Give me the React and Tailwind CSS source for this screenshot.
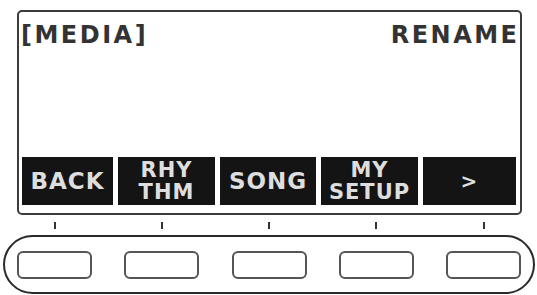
const cells = [
  { lines: ['BACK'], w: 'w-[91px]' },
  { lines: ['RHY', 'THM'], w: 'w-[97px]' },
  { lines: ['SONG'], w: 'w-[96px]' },
  { lines: ['MY', 'SETUP'], w: 'w-[97px]' },
  { lines: ['>'], w: 'w-[93px]' },
]

const lcd = { fontFamily: '"DejaVu Sans", "Liberation Sans", sans-serif' }

export default function App() {
  return (
    <div className="w-[537px] h-[295px] bg-white overflow-hidden relative" style={lcd}>
      {/* LCD screen */}
      <div className="ml-[17px] mt-[10px] w-[505px] h-[205px] border-2 border-[#3c3c3c] rounded-[5px] flex flex-col justify-between pb-[8px]">
        <div className="flex justify-between items-start pl-[2px] pr-[3px] pt-[11px] text-[24px] leading-[24px] font-bold text-[#333] tracking-[2.5px]">
          <span>[MEDIA]</span>
          <span className="mr-[-2.5px]">RENAME</span>
        </div>
        <div className="flex gap-[5px] px-[3px] h-[48px]">
          {cells.map((c, i) => (
            <div
              key={i}
              className={`${c.w} bg-[#141414] flex flex-col items-center justify-center text-[#dedede] font-bold tracking-[1px]`}
            >
              {c.lines.length === 1 ? (
                <span className={c.lines[0] === '>' ? 'text-[20px] leading-[20px]' : 'text-[23px] leading-[24px]'}>
                  {c.lines[0]}
                </span>
              ) : (
                c.lines.map((l) => (
                  <span key={l} className="text-[21px] leading-[22px]">{l}</span>
                ))
              )}
            </div>
          ))}
        </div>
      </div>

      {/* ticks */}
      <div className="flex justify-between px-[17px] mt-[7px] w-[538px]">
        {cells.map((_, i) => (
          <div key={i} className="w-[75px] flex justify-center">
            <div className="w-[2px] h-[7px] bg-[#333]" />
          </div>
        ))}
      </div>

      {/* button strip */}
      <div className="ml-[3px] mt-[6px] w-[532px] h-[59px] border-2 border-[#2a2a2a] rounded-full flex items-center justify-between px-[12px]">
        {cells.map((_, i) => (
          <div key={i} className="w-[75px] h-[28px] border-2 border-[#555] rounded-[6px] bg-white" />
        ))}
      </div>
    </div>
  )
}
